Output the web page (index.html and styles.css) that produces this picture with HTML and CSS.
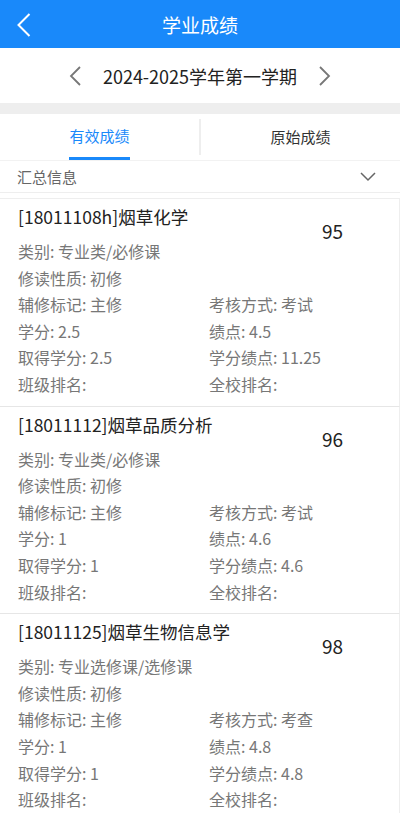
FILE: index.html
```html
<!DOCTYPE html>
<html lang="zh-CN">
<head>
    <meta charset="UTF-8">
    <meta name="viewport" content="width=device-width, initial-scale=1.0">
    <title>学业成绩</title>
    <link rel="stylesheet" href="styles.css">
</head>
<body>
    <header class="navbar">
        <svg class="back" width="14" height="24" viewBox="0 0 14 24"><path d="M12.5 1 L1.5 12 L12.5 23" fill="none" stroke="#fff" stroke-width="2"/></svg>
        <h1>学业成绩</h1>
    </header>

    <div class="term">
        <svg class="arrow" width="12" height="20" viewBox="0 0 12 20"><path d="M11 1 L2 10 L11 19" fill="none" stroke="#777" stroke-width="1.8"/></svg>
        <span class="term-name">2024-2025学年第一学期</span>
        <svg class="arrow" width="12" height="20" viewBox="0 0 12 20"><path d="M1 1 L10 10 L1 19" fill="none" stroke="#777" stroke-width="1.8"/></svg>
    </div>

    <div class="gap"></div>

    <div class="tabs">
        <div class="tab active"><span>有效成绩</span></div>
        <div class="tab-sep"></div>
        <div class="tab"><span>原始成绩</span></div>
    </div>

    <div class="summary">
        <span>汇总信息</span>
        <svg width="16" height="10" viewBox="0 0 16 10"><path d="M1 1 L8 8 L15 1" fill="none" stroke="#666" stroke-width="1.5"/></svg>
    </div>

    <div class="list">
        <div class="card">
            <div class="card-head">
                <div class="course">[18011108h]烟草化学</div>
                <div class="score">95</div>
            </div>
            <div class="row first">类别: 专业类/必修课</div>
            <div class="row">修读性质: 初修</div>
            <div class="grid">
                <div>辅修标记: 主修</div><div>考核方式: 考试</div>
                <div>学分: 2.5</div><div>绩点: 4.5</div>
                <div>取得学分: 2.5</div><div>学分绩点: 11.25</div>
                <div>班级排名:</div><div>全校排名:</div>
            </div>
        </div>

        <div class="card">
            <div class="card-head">
                <div class="course">[18011112]烟草品质分析</div>
                <div class="score">96</div>
            </div>
            <div class="row first">类别: 专业类/必修课</div>
            <div class="row">修读性质: 初修</div>
            <div class="grid">
                <div>辅修标记: 主修</div><div>考核方式: 考试</div>
                <div>学分: 1</div><div>绩点: 4.6</div>
                <div>取得学分: 1</div><div>学分绩点: 4.6</div>
                <div>班级排名:</div><div>全校排名:</div>
            </div>
        </div>

        <div class="card">
            <div class="card-head">
                <div class="course">[18011125]烟草生物信息学</div>
                <div class="score">98</div>
            </div>
            <div class="row first">类别: 专业选修课/选修课</div>
            <div class="row">修读性质: 初修</div>
            <div class="grid">
                <div>辅修标记: 主修</div><div>考核方式: 考查</div>
                <div>学分: 1</div><div>绩点: 4.8</div>
                <div>取得学分: 1</div><div>学分绩点: 4.8</div>
                <div>班级排名:</div><div>全校排名:</div>
            </div>
        </div>
    </div>
</body>
</html>
```

FILE: styles.css
```css
body {
    font-family: "Noto Sans CJK SC", "Noto Sans", sans-serif;
    background-color: #fff;
    margin: 0;
    padding: 0;
}

.navbar {
    height: 48px;
    background-color: #1989fa;
    display: flex;
    align-items: center;
    justify-content: center;
    position: relative;
}

.navbar .back {
    position: absolute;
    left: 17px;
    top: 13px;
}

.navbar h1 {
    margin: 0;
    color: #fff;
    font-size: 19px;
    font-weight: normal;
}

.term {
    height: 55px;
    display: flex;
    align-items: center;
    justify-content: center;
    gap: 22px;
}

.term-name {
    font-size: 18px;
    color: #222;
}

.gap {
    height: 11px;
    background-color: #eee;
}

.tabs {
    height: 46px;
    display: flex;
    align-items: center;
    border-bottom: 1px solid #f2f2f2;
}

.tab {
    flex: 1;
    height: 100%;
    display: flex;
    justify-content: center;
    align-items: center;
    font-size: 15px;
    color: #333;
}

.tab span {
    height: 100%;
    display: flex;
    align-items: center;
    box-sizing: border-box;
    padding-bottom: 2px;
}

.tab.active span {
    color: #1989fa;
    border-bottom: 3px solid #1989fa;
    padding-bottom: 0;
}

.tab-sep {
    width: 2px;
    height: 36px;
    background-color: #eee;
}

.summary {
    height: 31px;
    display: flex;
    align-items: center;
    justify-content: space-between;
    padding: 0 24px 0 17px;
    font-size: 15px;
    color: #666;
    border-bottom: 1px solid #eee;
}

.list {
    margin-top: 5px;
    border-top: 1px solid #eee;
}

.card {
    border-right: 1px solid #eee;
    border-bottom: 1px solid #e6e6e6;
    padding: 5px 0 8px 18px;
}

.card-head {
    display: flex;
    align-items: flex-start;
}

.course {
    width: 304px;
    font-size: 17.5px;
    color: #222;
    line-height: 26px;
}

.score {
    font-size: 19px;
    color: #222;
    margin-top: 14px;
    line-height: 26px;
}

.row, .grid div {
    font-size: 16px;
    color: #777;
    line-height: 26.6px;
}

.row.first {
    margin-top: -6px;
}

.grid {
    display: grid;
    grid-template-columns: 191px 1fr;
}
```
